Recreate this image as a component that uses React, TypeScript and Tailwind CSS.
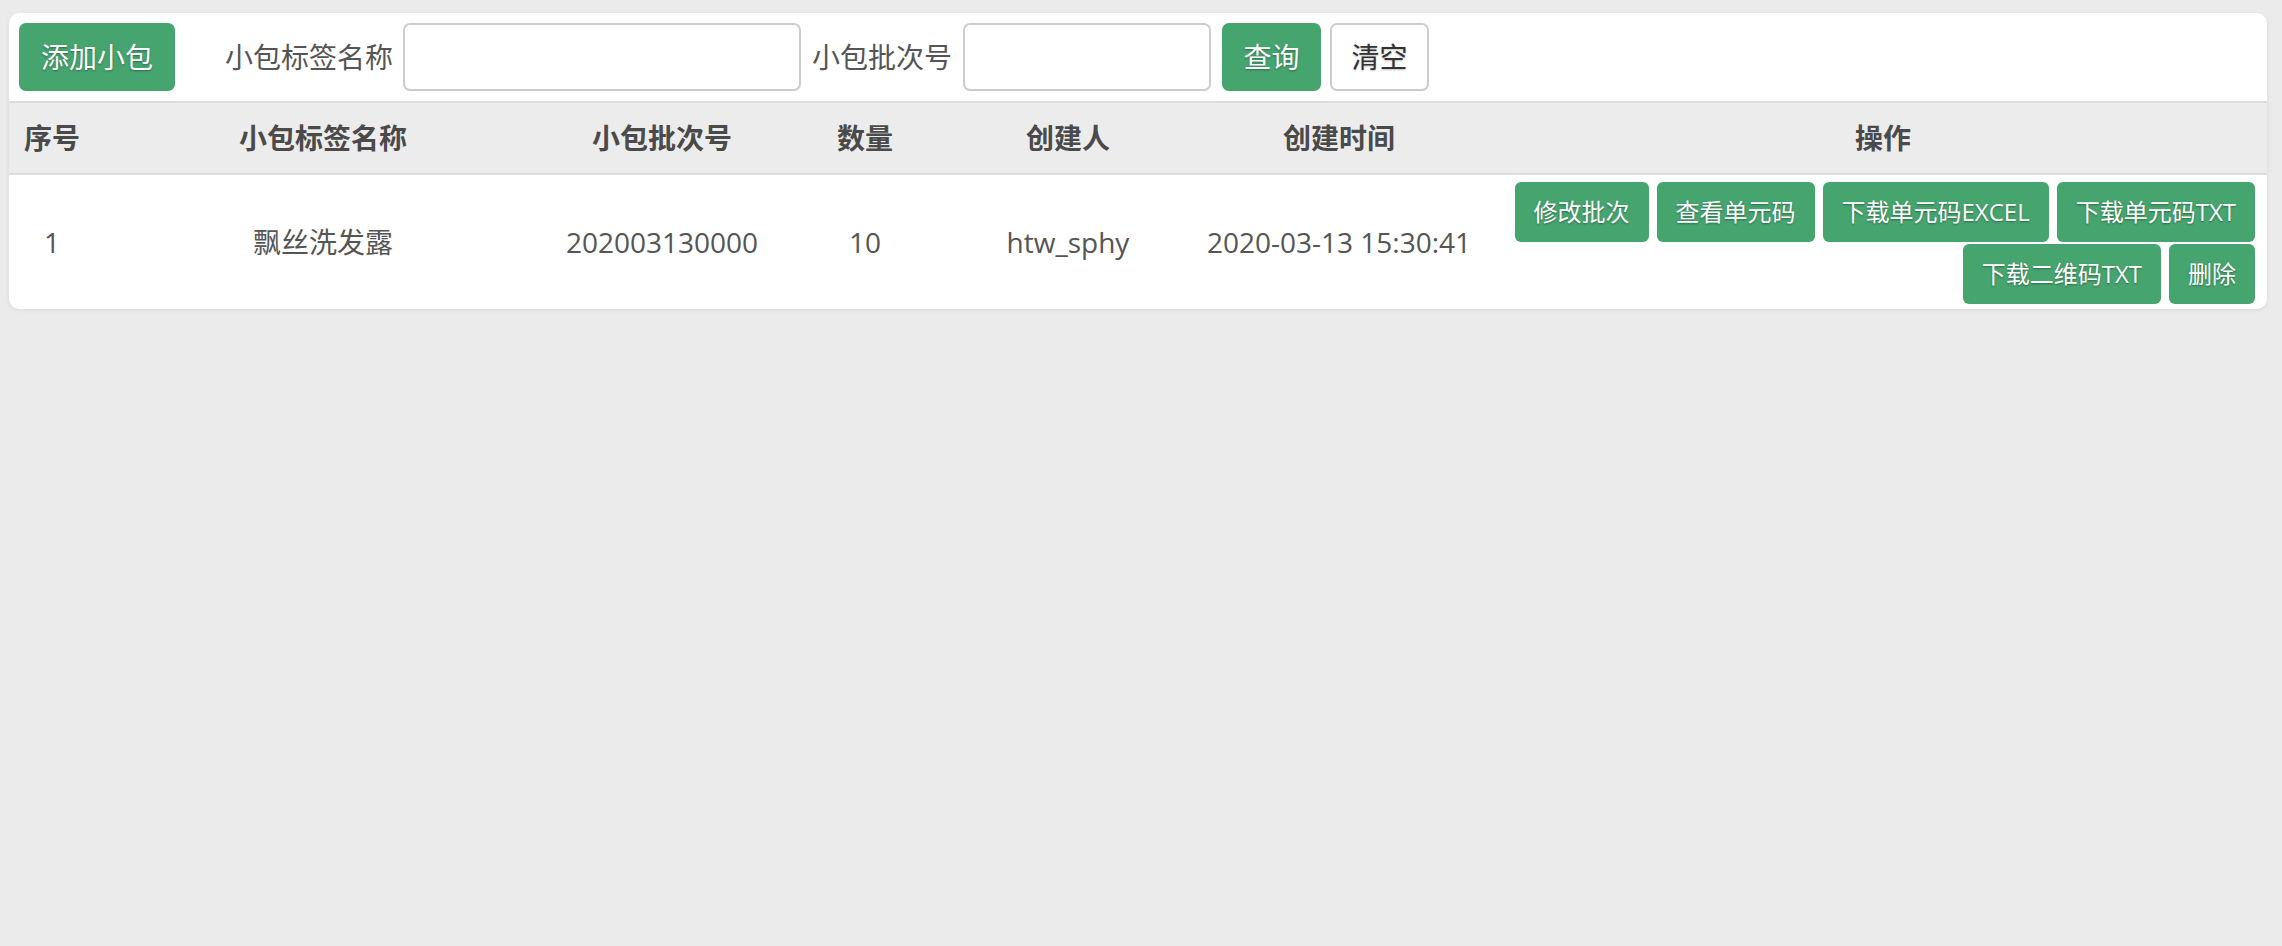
import React from "react";

type Packet = {
  id: number;
  name: string;
  batch: string;
  count: number;
  creator: string;
  createdAt: string;
};

const rows: Packet[] = [
  { id: 1, name: "飘丝洗发露", batch: "202003130000", count: 10, creator: "htw_sphy", createdAt: "2020-03-13 15:30:41" },
];

const actions = ["修改批次", "查看单元码", "下载单元码EXCEL", "下载单元码TXT", "下载二维码TXT", "删除"];

const cols = "grid grid-cols-[86px_456px_222px_184px_222px_320px_1fr]";

export default function App() {
  return (
    <div className="min-h-[946px] bg-[#ebebeb] pt-[13px] pl-[9px] pr-[15px] font-['Open_Sans','Noto_Sans_CJK_SC',sans-serif] text-[#555]">
      <div className="bg-white rounded-[10px] shadow-[0_1px_4px_rgba(0,0,0,0.08)] overflow-hidden">
        {/* toolbar */}
        <div className="flex items-center p-[10px] text-[28px]">
          <button className="h-[68px] w-[156px] rounded-[7px] bg-[#46a46f] text-white [text-shadow:0_1px_2px_rgba(0,0,0,0.35)]">
            添加小包
          </button>
          <span className="ml-[50px]">小包标签名称</span>
          <input className="ml-[10px] h-[68px] w-[398px] rounded-[7px] border-2 border-[#ccc] outline-none" />
          <span className="ml-[11px]">小包批次号</span>
          <input className="ml-[11px] h-[68px] w-[248px] rounded-[7px] border-2 border-[#ccc] outline-none" />
          <button className="ml-[11px] h-[68px] w-[99px] rounded-[7px] bg-[#46a46f] text-white [text-shadow:0_1px_2px_rgba(0,0,0,0.35)]">
            查询
          </button>
          <button className="ml-[9px] h-[68px] w-[99px] rounded-[7px] border-2 border-[#ccc] bg-white text-[#333] [text-shadow:0_1px_2px_rgba(0,0,0,0.25)]">
            清空
          </button>
        </div>

        {/* header */}
        <div className={`${cols} h-[74px] items-center border-y-2 border-[#ddd] bg-[#ececec] text-[28px] font-bold text-[#4a4a4a] text-center`}>
          <div>序号</div>
          <div>小包标签名称</div>
          <div>小包批次号</div>
          <div>数量</div>
          <div>创建人</div>
          <div>创建时间</div>
          <div>操作</div>
        </div>

        {/* rows */}
        {rows.map((r) => (
          <div key={r.id} className={`${cols} items-center text-[28px] text-center`}>
            <div>{r.id}</div>
            <div>{r.name}</div>
            <div>{r.batch}</div>
            <div>{r.count}</div>
            <div>{r.creator}</div>
            <div>{r.createdAt}</div>
            <div className="flex flex-wrap justify-end gap-x-[8px] gap-y-[2px] pt-[7px] pb-[5px] pr-[12px] pl-[12px]">
              {actions.map((a) => (
                <button
                  key={a}
                  className="h-[60px] px-[19px] rounded-[6px] bg-[#46a46f] text-[24px] text-white [text-shadow:0_1px_2px_rgba(0,0,0,0.35)]"
                >
                  {a}
                </button>
              ))}
            </div>
          </div>
        ))}
      </div>
    </div>
  );
}
